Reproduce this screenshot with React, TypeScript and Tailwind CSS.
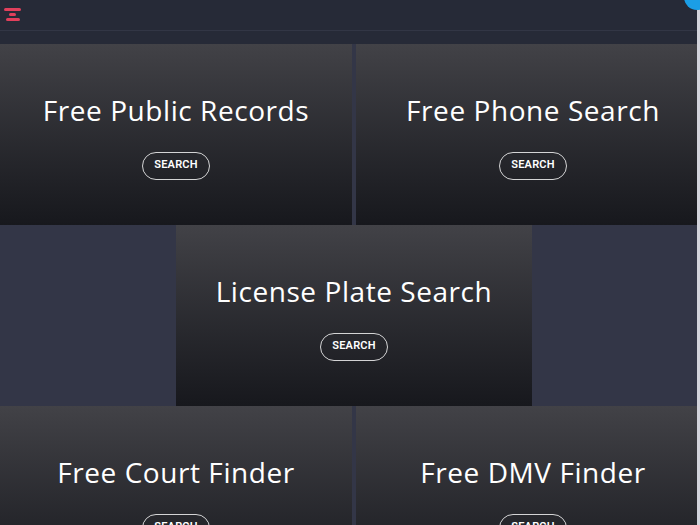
const cardBg = "bg-gradient-to-b from-[#424247] to-[#17181d]";

function Card({ title, className = "" }: { title: string; className?: string }) {
  return (
    <div className={`flex h-[181px] flex-col items-center justify-center pt-[5px] ${cardBg} ${className}`}>
      <h2 className="font-['Open_Sans',sans-serif] text-[28px] font-medium leading-[30px] tracking-[0.02em] text-white">
        {title}
      </h2>
      <button className="mt-[27px] h-[28px] rounded-full border border-white/80 px-[11px] font-['Roboto',sans-serif] text-[11px] font-semibold tracking-[0.02em] text-white">
        SEARCH
      </button>
    </div>
  );
}

export default function App() {
  return (
    <div className="relative h-[525px] w-[700px] overflow-hidden bg-[#333647]">
      <div className="w-[710px]">
        <header className="h-[44px] bg-[#262a37]">
          <div className="flex h-[30px] items-start px-[4px] pt-[8px]">
            <div className="flex w-[17px] flex-col items-center gap-[2px]">
              <span className="h-[3px] w-[17px] rounded-sm bg-[#e2405c]" />
              <span className="h-[3px] w-[7px] rounded-sm bg-[#e2405c]" />
              <span className="h-[3px] w-[14px] rounded-sm bg-[#e2405c]" />
            </div>
          </div>
          <div className="h-px bg-[#323645]" />
        </header>
        <div className="grid grid-cols-[352px_354px] gap-x-[4px]">
          <Card title="Free Public Records" />
          <Card title="Free Phone Search" />
        </div>
        <div className="flex pl-[176px]">
          <Card title="License Plate Search" className="w-[356px]" />
        </div>
        <div className="grid grid-cols-[352px_354px] gap-x-[4px]">
          <Card title="Free Court Finder" />
          <Card title="Free DMV Finder" />
        </div>
      </div>
      <div className="absolute right-0 top-0 h-full w-[3px] bg-[#d3d4dc]" />
      <div className="absolute -right-[10px] -top-[16px] h-[26px] w-[26px] rounded-full bg-[#1b9ee6]" />
    </div>
  );
}
